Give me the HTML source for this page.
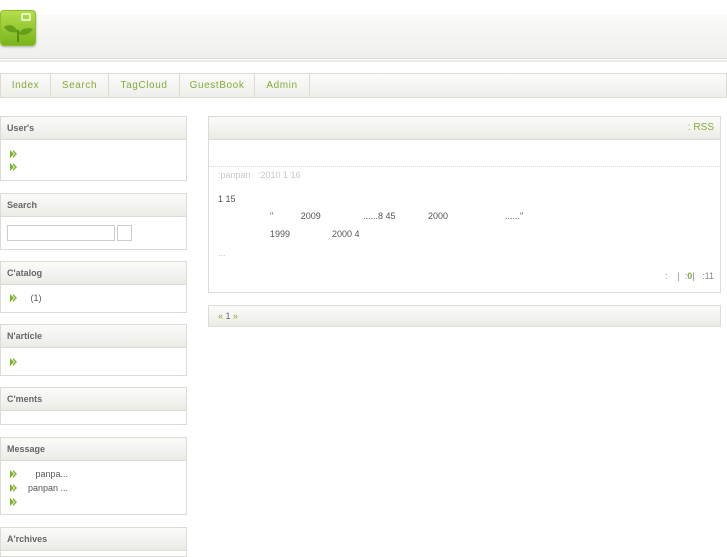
<!DOCTYPE html>
<html><head><meta charset="utf-8"><style>
*{margin:0;padding:0;box-sizing:border-box}
body{width:727px;height:545px;overflow:hidden;background:#fff;font-family:"Liberation Sans","Noto Sans CJK SC",sans-serif;font-size:9px;color:#555;position:relative}
.a{position:absolute}
.hdr{left:0;top:15px;width:727px;height:44px;background:linear-gradient(#fafaf9,#efefec);border-bottom:1px solid #dcdcd6}
.hl{left:0;top:60px;width:727px;height:2px;background:#ecece8}
.logo{left:0;top:10px;width:36px;height:36px;border-radius:4px;background:linear-gradient(#b4de4c,#78b41a);box-shadow:0 1px 2px #aaa;border:1px solid #8cbf2a}
.nav{left:0;top:73px;width:727px;height:25px;border:1px solid #dcdcd5;background:linear-gradient(#fbfbfa,#eeeeea)}
.nav span{position:absolute;top:0;height:23px;line-height:23px;text-align:center;color:#86ab3a;font-size:10px;letter-spacing:.6px;border-right:1px solid #dcdcd5}
.box{left:0;width:187px;border:1px solid #dcdcd5;background:#fff}
.bh{height:23px;line-height:22px;padding-left:6px;font-weight:bold;color:#666;font-size:9px;background:linear-gradient(#fbfbfa,#ebebe6);border-bottom:1px solid #dcdcd5}
.li{position:absolute;left:9px;font-size:9px;color:#555}
.ic{display:inline-block;width:8px;height:8px;vertical-align:-1px}
.main{left:208px;top:116px;width:513px;height:177px;border:1px solid #dcdcd5}
.mh{height:23px;background:linear-gradient(#fbfbfa,#ebebe6);border-bottom:1px solid #dcdcd5;text-align:right;padding-right:6px;line-height:22px;color:#86ab3a;font-size:10px}
</style></head><body>
<svg width="0" height="0" style="position:absolute"><defs><g id="ar"><path d="M0 0 L4 4 L0 8 Z M3 0 L7 4 L3 8 L3 6 L5 4 L3 2Z" fill="#7cb52a"/></g></defs></svg>
<div class="a hdr"></div><div class="a hl"></div>
<div class="a logo"><svg width="34" height="34"><rect x="21" y="3" width="8" height="6" fill="none" stroke="#fff" stroke-width="1.3"/><path d="M17 31 V19" stroke="#4a7a10" stroke-width="1.5"/><path d="M17 21 C13 13 7 13 3 16 C7 22 13 22 17 21Z M17 23 C21 17 27 16 32 18 C28 24 22 25 17 23Z" fill="#5f9a18" opacity=".9"/></svg></div>
<div class="a nav">
<span style="left:0;width:50px">Index</span><span style="left:50px;width:58px">Search</span><span style="left:108px;width:71px">TagCloud</span><span style="left:179px;width:75px">GuestBook</span><span style="left:254px;width:55px">Admin</span>
</div>
<div class="a box" style="top:116px;height:65px"><div class="bh">User's</div>
<span class="li" style="top:32px"><svg class="ic"><use href="#ar"/></svg></span><span class="li" style="top:45px"><svg class="ic"><use href="#ar"/></svg></span></div>
<div class="a box" style="top:193px;height:57px"><div class="bh">Search</div>
<div class="a" style="left:6px;top:31px;width:108px;height:16px;border:1px solid #ccc"></div>
<div class="a" style="left:116px;top:31px;width:15px;height:16px;border:1px solid #ccc"></div></div>
<div class="a box" style="top:261px;height:52px"><div class="bh">C'atalog</div>
<span class="li" style="top:31px"><svg class="ic"><use href="#ar"/></svg>&nbsp;&nbsp;&nbsp;&nbsp;&nbsp;(1)</span></div>
<div class="a box" style="top:324px;height:52px"><div class="bh">N'article</div>
<span class="li" style="top:32px"><svg class="ic"><use href="#ar"/></svg></span></div>
<div class="a box" style="top:387px;height:38px"><div class="bh">C'ments</div></div>
<div class="a box" style="top:437px;height:78px"><div class="bh">Message</div>
<span class="li" style="top:31px"><svg class="ic"><use href="#ar"/></svg>&nbsp;&nbsp;&nbsp;&nbsp;&nbsp;&nbsp;&nbsp;panpa...</span>
<span class="li" style="top:45px"><svg class="ic"><use href="#ar"/></svg>&nbsp;&nbsp;&nbsp;&nbsp;panpan ...</span>
<span class="li" style="top:59px"><svg class="ic"><use href="#ar"/></svg></span></div>
<div class="a box" style="top:527px;height:30px"><div class="bh">A'rchives</div></div>
<div class="a main"><div class="mh">: RSS</div>
<div class="a" style="left:0;top:49px;width:511px;border-top:1px dotted #ddd"></div>
<span class="a" style="left:9px;top:53px;color:#c8c8c8">:panpan&nbsp;&nbsp;&nbsp;:2010 1 16</span>
<span class="a" style="left:9px;top:77px">1 15</span>
<span class="a" style="left:61px;top:94px">"&nbsp;&nbsp;&nbsp;&nbsp;&nbsp;&nbsp;&nbsp;&nbsp;&nbsp;&nbsp;&nbsp;2009</span>
<span class="a" style="left:154px;top:94px">......8 45</span>
<span class="a" style="left:219px;top:94px">2000</span>
<span class="a" style="left:296px;top:94px">......"</span>
<span class="a" style="left:61px;top:112px">1999</span>
<span class="a" style="left:123px;top:112px">2000 4</span>
<span class="a" style="left:9px;top:131px;color:#bbb">...</span>
<span class="a" style="right:6px;top:154px;color:#888">:&nbsp;&nbsp;&nbsp;&nbsp;|&nbsp;&nbsp;:<b style="color:#86ab3a">0</b>|&nbsp;&nbsp;&nbsp;:11</span>
</div>
<div class="a" style="left:208px;top:305px;width:513px;height:22px;border:1px solid #dcdcd5;background:linear-gradient(#fbfbfa,#ebebe6);line-height:20px;padding-left:9px;color:#86ab3a">« <span style="color:#666">1</span> »</div>
</body></html>
